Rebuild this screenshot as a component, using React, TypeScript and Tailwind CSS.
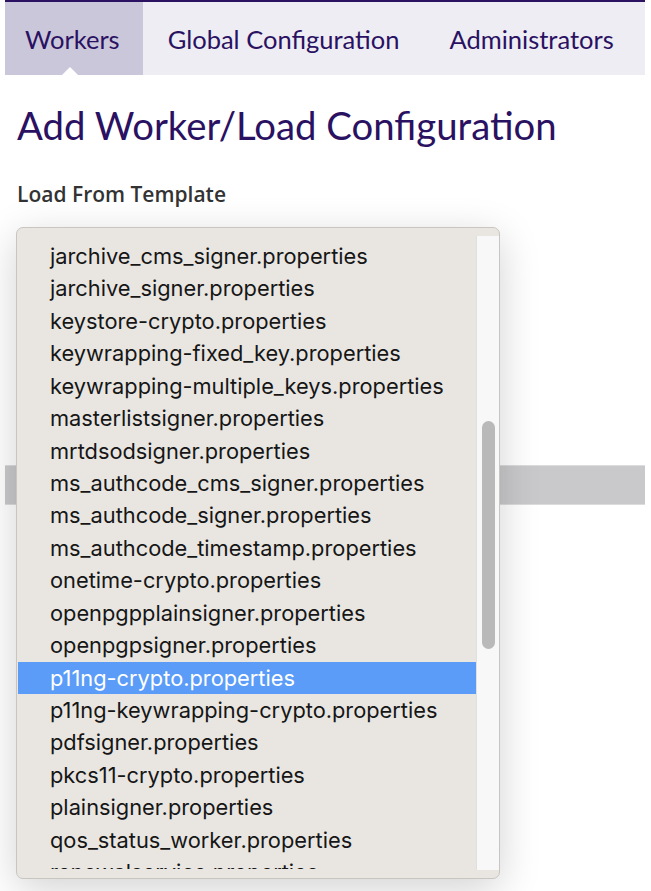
import React from "react";

const templates = [
  "jarchive_cms_signer.properties",
  "jarchive_signer.properties",
  "keystore-crypto.properties",
  "keywrapping-fixed_key.properties",
  "keywrapping-multiple_keys.properties",
  "masterlistsigner.properties",
  "mrtdsodsigner.properties",
  "ms_authcode_cms_signer.properties",
  "ms_authcode_signer.properties",
  "ms_authcode_timestamp.properties",
  "onetime-crypto.properties",
  "openpgpplainsigner.properties",
  "openpgpsigner.properties",
  "p11ng-crypto.properties",
  "p11ng-keywrapping-crypto.properties",
  "pdfsigner.properties",
  "pkcs11-crypto.properties",
  "plainsigner.properties",
  "qos_status_worker.properties",
  "renewalservice.properties",
];

const selected = "p11ng-crypto.properties";

function Tabs() {
  return (
    <nav className="flex h-[75px] border-t-2 border-[#2a1162] bg-[#ededf3] font-['Lato',sans-serif] text-[25.5px] text-[#2a1162]">
      <div className="relative flex items-center bg-[#cbc7db] pl-[20px] pr-[23px] pt-[2px]">
        Workers
        <span className="absolute bottom-0 left-[57px] h-0 w-0 border-x-[8px] border-b-[8px] border-x-transparent border-b-white" />
      </div>
      <div className="flex items-center px-[25px] pt-[2px]">Global Configuration</div>
      <div className="flex items-center px-[25px] pt-[2px]">Administrators</div>
    </nav>
  );
}

function TemplateList() {
  return (
    <div className="absolute left-[-1px] top-0 z-10 h-[652px] w-[484px] overflow-hidden rounded-[7px] border border-[#c9c6c2] bg-[#e9e6e2] shadow-[0_10px_40px_rgba(0,0,0,0.18)]">
      <div className="flex h-full">
        <ul className="mt-[12px] h-[629px] flex-1 overflow-hidden pl-[1px] font-['Inter',sans-serif] text-[21.8px] text-[#161616]">
          {templates.map((name) => (
            <li
              key={name}
              className={`flex h-[32.45px] items-center pl-[32px] ${
                name === selected ? "bg-[#5a9cf8] text-white" : ""
              }`}
            >
              {name}
            </li>
          ))}
        </ul>
        <div className="mt-[8px] mb-[8px] flex w-[23px] justify-center border-l border-[#e2e0de] bg-[#f8f8f8]">
          <div className="mt-[185px] h-[228px] w-[13px] rounded-full bg-[#b9b9b9]" />
        </div>
      </div>
    </div>
  );
}

export default function App() {
  return (
    <div className="min-h-[891px] bg-white pl-[5px] pr-[6px]">
      <Tabs />
      <main className="px-3">
        <h1 className="mt-[26px] font-['Lato',sans-serif] text-[38.3px] leading-[48px] text-[#2a1162]">
          Add Worker/Load Configuration
        </h1>
        <label className="mt-[30px] block font-['Open_Sans',sans-serif] text-[21px] leading-[30px] font-semibold text-[#333]">
          Load From Template
        </label>
        <div className="relative mt-[18px]">
          <TemplateList />
          <div className="h-[238px]" />
          <div className="-mx-3 h-[40px] border-y border-[#dcdcdc] bg-[#c9c9cb]" />
        </div>
      </main>
    </div>
  );
}
